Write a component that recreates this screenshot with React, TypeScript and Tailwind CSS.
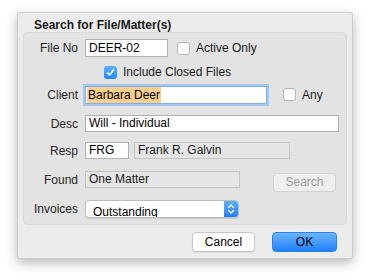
const font = { fontFamily: '"Liberation Sans", Arial, sans-serif' }

function Check({ checked = false }: { checked?: boolean }) {
  if (checked) {
    return (
      <span className="w-[13px] h-[13px] rounded-[3px] bg-gradient-to-b from-[#5fb0ff] to-[#1b86fb] flex items-center justify-center shrink-0">
        <svg width="9" height="9" viewBox="0 0 9 9">
          <path d="M1.5 4.8 L3.6 7 L7.6 1.8" stroke="white" strokeWidth="1.6" fill="none" strokeLinecap="round" strokeLinejoin="round" />
        </svg>
      </span>
    )
  }
  return <span className="w-[13px] h-[13px] rounded-[3px] bg-white border border-[#b4b4b4] shrink-0" />
}

function Label({ children }: { children: string }) {
  return <div className="w-[54px] text-right text-[12px] text-[#262626] shrink-0">{children}</div>
}

export default function App() {
  return (
    <div className="w-[370px] h-[280px] bg-white pt-[12px] pl-[17px]" style={font}>
      <div className="w-[336px] h-[247px] bg-[#ececec] border border-[#cdcdcd] rounded-[2px] shadow-[0_4px_12px_rgba(0,0,0,0.28)]">
        <div className="pl-[16px] pt-[4px] h-[19px] leading-[16px] text-[12px] font-bold text-[#1a1a1a]">
          Search for File/Matter(s)
        </div>

        <div className="mx-[5px] h-[193px] bg-[#e3e3e3] border border-[#dadada] rounded-[4px] pt-[6px]">
          {/* File No */}
          <div className="flex items-center h-[18px] gap-[7px]">
            <Label>File No</Label>
            <div className="w-[83px] h-[18px] bg-white border border-[#b2b2b2] text-[12px] leading-[16px] pl-[3px] text-black">DEER-02</div>
            <div className="flex items-center gap-[6px] ml-[2px]">
              <Check />
              <span className="text-[12px] text-[#1a1a1a]">Active Only</span>
            </div>
          </div>

          {/* Include Closed */}
          <div className="flex items-center h-[20px] mt-[5px] pl-[80px] gap-[6px]">
            <Check checked />
            <span className="text-[12px] text-[#1a1a1a]">Include Closed Files</span>
          </div>

          {/* Client */}
          <div className="flex items-center h-[17px] mt-[4px] gap-[7px]">
            <Label>Client</Label>
            <div className="w-[182px] h-[18px] bg-white border border-[#7fb0ea] ring-[2px] ring-[#a5c8f2] text-[12px] leading-[16px] pl-[1px] text-black">
              <span className="bg-[#fcd08c] px-[1px] inline-block h-[16px]">Barbara Deer</span>
            </div>
            <div className="flex items-center gap-[6px] ml-[9px]">
              <Check />
              <span className="text-[12px] text-[#1a1a1a]">Any</span>
            </div>
          </div>

          {/* Desc */}
          <div className="flex items-center h-[17px] mt-[12px] gap-[7px]">
            <Label>Desc</Label>
            <div className="w-[254px] h-[17px] bg-white border border-[#b2b2b2] text-[12px] leading-[15px] pl-[3px] text-black">Will - Individual</div>
          </div>

          {/* Resp */}
          <div className="flex items-center h-[17px] mt-[10px] gap-[7px]">
            <Label>Resp</Label>
            <div className="w-[44px] h-[17px] bg-white border border-[#b2b2b2] text-[12px] leading-[15px] pl-[3px] text-black">FRG</div>
            <div className="w-[156px] h-[17px] bg-[#e6e6e6] border border-[#c4c4c4] text-[12px] leading-[15px] pl-[3px] text-[#1a1a1a] -ml-[2px]">Frank R. Galvin</div>
          </div>

          {/* Found */}
          <div className="flex items-start h-[21px] mt-[12px] gap-[7px]">
            <Label>Found</Label>
            <div className="w-[155px] h-[17px] bg-[#e6e6e6] border border-[#c4c4c4] text-[12px] leading-[15px] pl-[3px] text-[#1a1a1a]">One Matter</div>
            <div className="ml-[26px] mt-[2px] w-[63px] h-[19px] rounded-[4px] bg-[#efefef] border border-[#d2d2d2] text-[12px] leading-[17px] text-center text-[#9b9b9b]">Search</div>
          </div>

          {/* Invoices */}
          <div className="flex items-center h-[17px] mt-[8px] gap-[7px]">
            <Label>Invoices</Label>
            <div className="w-[154px] h-[18px] bg-white border border-[#bcbcbc] rounded-[4px] flex overflow-hidden shadow-[0_1px_1px_rgba(0,0,0,0.1)]">
              <div className="flex-1 text-[12px] leading-[14px] pt-[4px] pl-[7px] text-black overflow-hidden">Outstanding</div>
              <div className="w-[14px] h-full bg-gradient-to-b from-[#63b0fb] to-[#1a7ff7] flex items-center justify-center">
                <svg width="8" height="12" viewBox="0 0 8 12">
                  <path d="M1.5 4.5 L4 2 L6.5 4.5 M1.5 7.5 L4 10 L6.5 7.5" stroke="white" strokeWidth="1.3" fill="none" strokeLinecap="round" strokeLinejoin="round" />
                </svg>
              </div>
            </div>
          </div>
        </div>

        <div className="flex mt-[7px] pl-[174px] gap-[17px]">
          <div className="w-[63px] h-[20px] bg-white border border-[#c6c6c6] rounded-[4px] text-[12px] leading-[18px] text-center text-black shadow-[0_1px_1px_rgba(0,0,0,0.08)]">Cancel</div>
          <div className="w-[65px] h-[20px] bg-gradient-to-b from-[#6ab4fb] to-[#1a80fb] border border-[#2a84ee] rounded-[4px] text-[12px] leading-[18px] text-center text-black">OK</div>
        </div>
      </div>
    </div>
  )
}
